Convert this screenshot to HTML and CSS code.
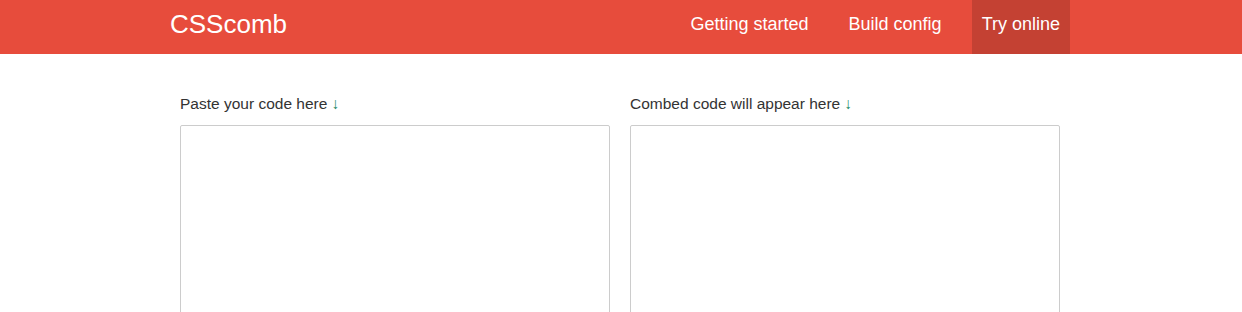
FILE: index.html
```html
<!DOCTYPE html>
<html lang="en">
<head>
<meta charset="UTF-8">
<meta name="viewport" content="width=device-width, initial-scale=1.0">
<title>CSScomb: Try online</title>
<link rel="stylesheet" href="styles.css">
</head>
<body>
<header class="navbar">
<div class="container navbar-inner">
<a class="brand" href="#">CSScomb</a>
<nav class="nav">
<a href="#">Getting started</a>
<a href="#">Build config</a>
<a class="active" href="#">Try online</a>
</nav>
</div>
</header>

<main class="container">
<div class="editors">
<div class="editor">
<label for="source">Paste your code here <span class="arrow">&darr;</span></label>
<textarea id="source"></textarea>
</div>
<div class="editor">
<label for="result">Combed code will appear here <span class="arrow">&darr;</span></label>
<textarea id="result" readonly></textarea>
</div>
</div>
</main>
</body>
</html>
```

FILE: styles.css
```css
body {
font-family: Arial, "Liberation Sans", sans-serif;
margin: 0;
padding: 0;
background-color: #fff;
color: #333;
}
.container {
width: 900px;
margin: 0 auto;
}
.navbar {
background-color: #e74c3c;
height: 54px;
padding-right: 2px;
}
.navbar-inner {
display: flex;
justify-content: space-between;
height: 100%;
}
.brand {
color: #fff;
text-decoration: none;
font-size: 26px;
line-height: 48px;
}
.nav {
display: flex;
gap: 20px;
}
.nav a {
color: #fff;
text-decoration: none;
font-size: 18px;
line-height: 48px;
padding: 0 10px;
}
.nav a.active {
background-color: #c44133;
}

main {
padding-right: 2px;
}
.editors {
display: flex;
gap: 20px;
padding: 41px 10px 0 10px;
}
.editor {
flex: 1;
}
label {
display: block;
font-size: 15.5px;
margin-bottom: 12px;
}
.arrow {
color: #1e8a66;
}
textarea {
display: block;
box-sizing: border-box;
width: 100%;
height: 300px;
border: 1px solid #ccc;
border-radius: 2px;
resize: none;
}
```
